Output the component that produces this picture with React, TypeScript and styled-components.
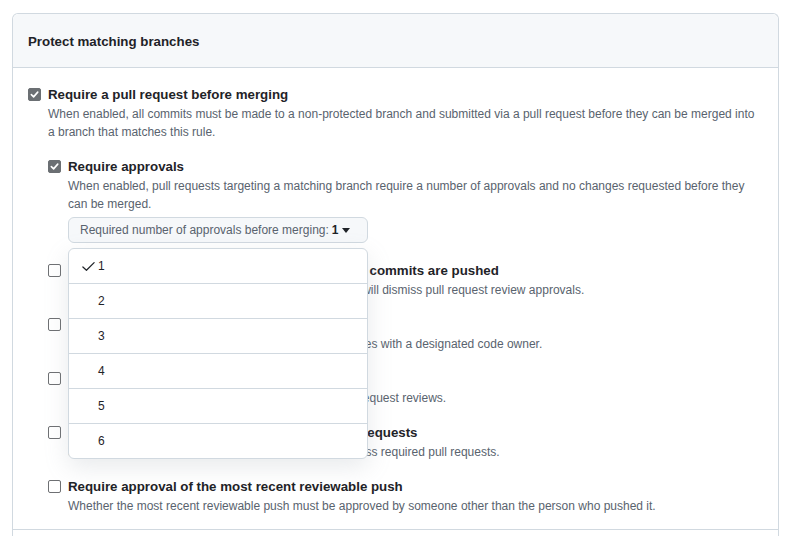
import React, { useState } from 'react';
import styled, { createGlobalStyle } from 'styled-components';

const GlobalStyle = createGlobalStyle`
  html, body {
    margin: 0;
    padding: 0;
    background: #ffffff;
    font-family: "Liberation Sans", Arial, sans-serif;
    color: #1f2328;
  }
  * { box-sizing: border-box; }
`;

const Page = styled.div`
  padding: 13px 12px 0 12px;
`;

const Card = styled.section`
  border: 1px solid #d1d9e0;
  border-bottom: none;
  border-radius: 6px 6px 0 0;
`;

const CardHeader = styled.div`
  background: #f6f8fa;
  border-bottom: 1px solid #d1d9e0;
  border-radius: 6px 6px 0 0;
  padding: 17px 15px 15px 15px;
  font-size: 13.3px;
  line-height: 21px;
  font-weight: 700;
`;

const CardBody = styled.div`
  padding: 16px 15px 14px 15px;
`;

const CardFooter = styled.div`
  border-top: 1px solid #d1d9e0;
  height: 8px;
`;

const Item = styled.div<{ $gap?: number }>`
  display: flex;
  align-items: flex-start;
  margin-top: ${(p) => (p.$gap ?? 15)}px;
  &:first-child { margin-top: 0; }
`;

const Box = styled.span<{ $checked?: boolean }>`
  flex: none;
  width: 13px;
  height: 13px;
  margin-top: 4px;
  margin-right: 7px;
  border-radius: 2px;
  display: flex;
  align-items: center;
  justify-content: center;
  background: ${(p) => (p.$checked ? '#6b6f73' : '#ffffff')};
  border: 1px solid ${(p) => (p.$checked ? '#6b6f73' : '#6e7073')};
  cursor: pointer;
`;

const Content = styled.div`
  flex: 1;
  min-width: 0;
`;

const Title = styled.div`
  font-size: 13.3px;
  line-height: 21px;
  font-weight: 700;
  color: #1f2328;
`;

const Note = styled.div`
  font-size: 12px;
  line-height: 18px;
  color: #59636e;
`;

const Nested = styled.div`
  margin-top: 15px;
`;

const SelectWrap = styled.div`
  position: relative;
  margin-top: 4px;
  width: 300px;
`;

const SelectButton = styled.button`
  display: flex;
  align-items: center;
  gap: 3px;
  width: 300px;
  height: 26px;
  padding: 0 11px;
  border: 1px solid #d1d9e0;
  border-radius: 6px;
  background: #f6f8fa;
  font-family: inherit;
  font-size: 12px;
  color: #59636e;
  cursor: pointer;
  strong { color: #1f2328; font-weight: 700; }
`;

const Menu = styled.ul`
  position: absolute;
  top: 31px;
  left: 0;
  width: 300px;
  margin: 0;
  padding: 0;
  list-style: none;
  background: #ffffff;
  border: 1px solid #d1d9e0;
  border-radius: 6px;
  box-shadow: 0 8px 24px rgba(140, 149, 159, 0.2);
  z-index: 10;
`;

const MenuItem = styled.li`
  display: flex;
  align-items: center;
  height: 35px;
  padding: 0 12px;
  font-size: 12px;
  color: #1f2328;
  border-top: 1px solid #d1d9e0;
  cursor: pointer;
  &:first-child { border-top: none; height: 34px; }
`;

const CheckSlot = styled.span`
  width: 17px;
  display: flex;
  align-items: center;
`;

const Check = ({ color = '#fff', size = 9 }: { color?: string; size?: number }) => (
  <svg width={size} height={size} viewBox="0 0 10 10">
    <path d="M1.5 5.2 L4 7.6 L8.6 2.4" fill="none" stroke={color} strokeWidth="1.8" strokeLinecap="round" strokeLinejoin="round" />
  </svg>
);

const MenuCheck = () => (
  <svg width="15" height="15" viewBox="0 0 16 16">
    <path d="M2 8.5 L5.8 12 L14 3.8" fill="none" stroke="#1f2328" strokeWidth="1.3" strokeLinecap="round" strokeLinejoin="round" />
  </svg>
);

const Caret = () => (
  <svg width="8" height="5" viewBox="0 0 8 5">
    <path d="M0 0 H8 L4 5 Z" fill="#1f2328" />
  </svg>
);

interface Rule {
  title: string;
  note: string;
}

const rules: Rule[] = [
  {
    title: 'Dismiss stale pull request approvals when new commits are pushed',
    note: 'New reviewable commits pushed to a matching branch will dismiss pull request review approvals.',
  },
  {
    title: 'Require review from Code Owners',
    note: 'Require an approved review in pull requests including files with a designated code owner.',
  },
  {
    title: 'Restrict who can dismiss pull request reviews',
    note: 'Specify people, teams, or apps allowed to dismiss pull request reviews.',
  },
  {
    title: 'Allow specified actors to bypass required pull requests',
    note: 'Specify people, teams, or apps who are allowed to bypass required pull requests.',
  },
  {
    title: 'Require approval of the most recent reviewable push',
    note: 'Whether the most recent reviewable push must be approved by someone other than the person who pushed it.',
  },
];

const App: React.FC = () => {
  const [approvals, setApprovals] = useState(1);
  const [open, setOpen] = useState(true);

  return (
    <Page>
      <GlobalStyle />
      <Card>
        <CardHeader>Protect matching branches</CardHeader>
        <CardBody>
          <Item>
            <Box $checked><Check /></Box>
            <Content>
              <Title>Require a pull request before merging</Title>
              <Note>
                When enabled, all commits must be made to a non-protected branch and submitted via a pull request
                before they can be merged into a branch that matches this rule.
              </Note>
              <Nested>
                <Item>
                  <Box $checked><Check /></Box>
                  <Content>
                    <Title>Require approvals</Title>
                    <Note>
                      When enabled, pull requests targeting a matching branch require a number of approvals and no
                      changes requested before they can be merged.
                    </Note>
                    <SelectWrap>
                      <SelectButton onClick={() => setOpen(!open)}>
                        Required number of approvals before merging: <strong>{approvals}</strong>
                        <Caret />
                      </SelectButton>
                      {open && (
                        <Menu>
                          {[1, 2, 3, 4, 5, 6].map((n) => (
                            <MenuItem key={n} onClick={() => { setApprovals(n); setOpen(false); }}>
                              <CheckSlot>{n === approvals && <MenuCheck />}</CheckSlot>
                              {n}
                            </MenuItem>
                          ))}
                        </Menu>
                      )}
                    </SelectWrap>
                  </Content>
                </Item>
                {rules.map((r, i) => (
                  <Item key={r.title} $gap={i === 0 ? 17 : 15}>
                    <Box />
                    <Content>
                      <Title>{r.title}</Title>
                      <Note>{r.note}</Note>
                    </Content>
                  </Item>
                ))}
              </Nested>
            </Content>
          </Item>
        </CardBody>
        <CardFooter />
      </Card>
    </Page>
  );
};

export default App;
